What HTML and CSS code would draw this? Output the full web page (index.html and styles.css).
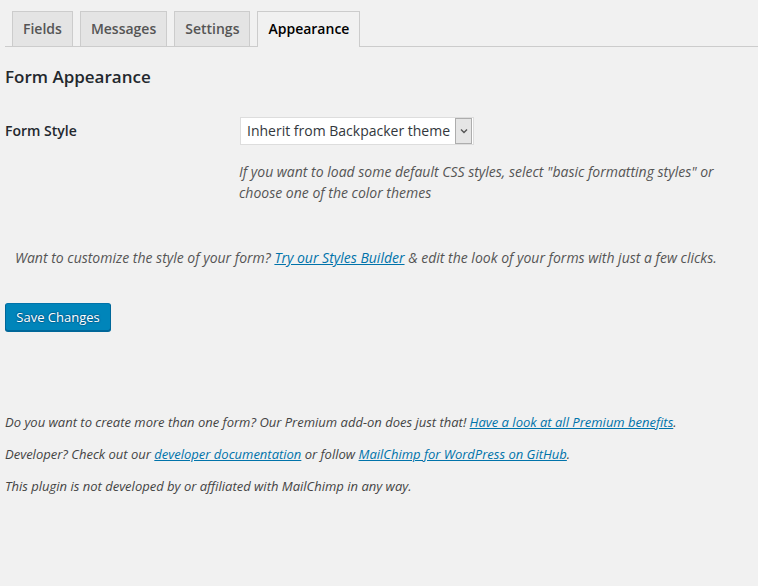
FILE: index.html
```html
<!DOCTYPE html>
<html>
<head>
<meta charset="utf-8">
<link rel="stylesheet" href="styles.css">
</head>
<body>
<div class="wrap">
  <nav class="tabs">
    <a class="tab">Fields</a>
    <a class="tab">Messages</a>
    <a class="tab">Settings</a>
    <a class="tab active">Appearance</a>
  </nav>
  <h2 class="title">Form Appearance</h2>
  <div class="row">
    <div class="label">Form Style</div>
    <div class="field">
      <div class="select">
        <span class="select-text">Inherit from Backpacker theme</span>
        <span class="select-arrow">
          <svg width="8" height="6" viewBox="0 0 8 6"><path d="M1 1.5 L4 4.5 L7 1.5" fill="none" stroke="#555" stroke-width="1.4"/></svg>
        </span>
      </div>
      <p class="description">If you want to load some default CSS styles, select "basic formatting styles" or choose one of the color themes</p>
    </div>
  </div>
  <p class="customize">Want to customize the style of your form? <a class="link">Try our Styles Builder</a> &amp; edit the look of your forms with just a few clicks.</p>
  <div class="submit"><button class="button">Save Changes</button></div>
  <div class="footer">
    <p>Do you want to create more than one form? Our Premium add-on does just that! <a class="link">Have a look at all Premium benefits</a>.</p>
    <p>Developer? Check out our <a class="link">developer documentation</a> or follow <a class="link">MailChimp for WordPress on GitHub</a>.</p>
    <p>This plugin is not developed by or affiliated with MailChimp in any way.</p>
  </div>
</div>
</body>
</html>
```
FILE: styles.css
```css
html, body {
  margin: 0;
  padding: 0;
  background: #f1f1f1;
}
body {
  font-family: "Open Sans", "Liberation Sans", sans-serif;
  font-size: 13px;
  color: #444;
  width: 758px;
  height: 586px;
  overflow: hidden;
}
.wrap {
  padding-left: 5px;
}
.tabs {
  display: flex;
  padding-top: 11px;
  border-bottom: 1px solid #ccc;
  box-sizing: content-box;
  height: 35px;
}
.tab {
  display: block;
  margin-left: 7px;
  padding: 5px 10px;
  border: 1px solid #ccc;
  border-bottom: none;
  background: #e4e4e4;
  color: #555;
  font-size: 14px;
  font-weight: 600;
  line-height: 24px;
  box-sizing: border-box;
  height: 35px;
  text-decoration: none;
}
.tab.active {
  background: #f1f1f1;
  color: #000;
  height: 36px;
  margin-bottom: -1px;
}
.title {
  margin: 18px 0 0;
  font-size: 17px;
  font-weight: 600;
  line-height: 23px;
  color: #23282d;
}
.row {
  display: flex;
  margin-top: 29px;
}
.label {
  width: 235px;
  flex: none;
  font-size: 14px;
  font-weight: 600;
  color: #23282d;
  line-height: 18px;
  padding-top: 5px;
}
.select {
  display: flex;
  align-items: center;
  width: 234px;
  height: 28px;
  box-sizing: border-box;
  background: #fff;
  border: 1px solid #ddd;
  padding: 1px 1px 1px 6px;
}
.select-text {
  flex: 1;
  font-size: 14px;
  color: #32373c;
  line-height: 24px;
}
.select-arrow {
  width: 17px;
  height: 26px;
  box-sizing: border-box;
  border: 1px solid #adadad;
  background: #e5e5e5;
  display: flex;
  align-items: center;
  justify-content: center;
}
.description {
  margin: 16px 0 0 -1px;
  font-size: 14px;
  font-style: italic;
  line-height: 21px;
  color: #555;
  width: 500px;
}
.customize {
  margin: 44px 0 0 10px;
  font-size: 14px;
  font-style: italic;
  line-height: 21px;
  color: #555;
}
.link {
  color: #0073aa;
  text-decoration: underline;
}
.submit {
  margin-top: 35px;
}
.button {
  display: block;
  height: 28px;
  width: 106px;
  padding: 0 10px 1px;
  background: #0085ba;
  border: 1px solid;
  border-color: #0073aa #006799 #006799;
  border-radius: 3px;
  box-shadow: 0 1px 0 #006799;
  color: #fff;
  font-family: "Open Sans", "Liberation Sans", sans-serif;
  font-size: 13px;
  line-height: 26px;
  text-shadow: 0 -1px 1px #006799, 1px 0 1px #006799, 0 1px 1px #006799, -1px 0 1px #006799;
}
.footer {
  margin-top: 81px;
}
.footer p {
  margin: 0 0 12px;
  font-size: 13px;
  font-style: italic;
  line-height: 20px;
  color: #444;
}
```
